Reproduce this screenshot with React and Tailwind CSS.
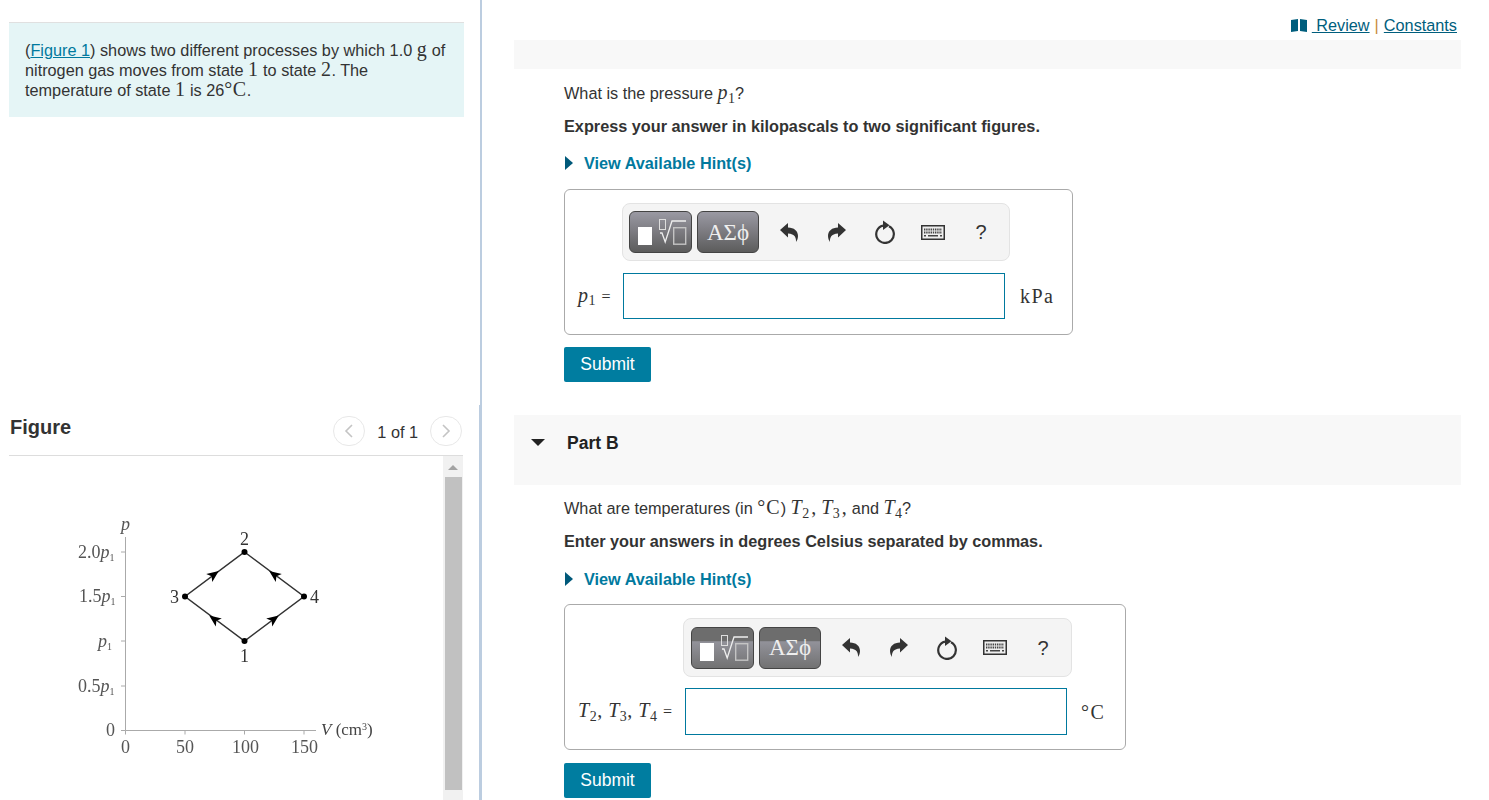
import React from "react";

const serif = "font-['Liberation_Serif',serif]";
const math = `${serif} text-[20px] leading-[0] tracking-[0.5px]`;
const sub = `${serif} text-[14px] leading-[0]`;

const TemplateIcon = () => (
  <svg width="61" height="40" viewBox="0 0 61 40" fill="none">
    <rect x="8" y="15" width="14" height="18" fill="#fff" />
    <rect x="29.500" y="7.500" width="6" height="10" stroke="#ddd" />
    <path d="M30 21l2 0 3.200 9L42 9h14" stroke="#eee" strokeWidth="1.300" />
    <rect x="43.700" y="15.700" width="12" height="16.500" stroke="#c4c4c4" strokeWidth="1.400" />
  </svg>
);

const ArrowIcon = ({ flip }) => (
  <svg className={flip ? "-scale-x-100" : ""} width="18" height="19" viewBox="0 0 18 19" fill="#333">
    <path d="M0 7L8 0V4.500C14 4.500 18 8 18 13C18 15.500 17 17.500 16 19C16.300 15 15 10.800 8 10.500V14.500Z" />
  </svg>
);

const RefreshIcon = () => (
  <svg width="22" height="24" viewBox="0 0 22 24" fill="none">
    <path d="M9 5.600A8.800 8.800 0 1 0 15 6.300" stroke="#333" strokeWidth="2.200" />
    <path d="M9 0.500l6.500 4.700-6.500 4.700z" fill="#333" />
  </svg>
);

const KeyboardIcon = () => (
  <svg width="24" height="15" viewBox="0 0 24 15" fill="none">
    <rect x="0.750" y="0.750" width="22.500" height="13.500" stroke="#333" strokeWidth="1.500" fill="#eee" />
    <path d="M3 4.500h18M3 7.500h18" stroke="#444" strokeWidth="1.800" strokeDasharray="1.400 0.800" />
    <path d="M3 10.800h2M7 10.800h10M19 10.800h2" stroke="#444" strokeWidth="1.600" />
  </svg>
);

const BookIcon = () => (
  <svg width="16" height="13" viewBox="0 0 16 13" fill="#005e7d">
    <path d="M0 1l7 -1v12l-7 1zM9 0l7 1v12l-7 -1z" />
  </svg>
);

const Toolbar = ({ flat, className }) => {
  const btn = flat
    ? "bg-[linear-gradient(#6d6d6d_0%,#6d6d6d_33%,#92929a_34%,#727272_100%)]"
    : "bg-[linear-gradient(#9a99a3,#5c5c5c)]";
  return (
    <div className={`flex items-center rounded-lg border border-[#e3e3e3] bg-[#f4f4f4] ${flat ? "w-[389px] pl-[7px]" : "w-[388px] pl-[6px]"} ${className}`}>
      <div className={`flex h-[42px] w-[63px] items-center justify-center rounded-md border border-[#444] ${btn}`}>
        <TemplateIcon />
      </div>
      <div className={`ml-[5px] flex h-[42px] w-[62px] items-center justify-center rounded-md border border-[#444] text-[23px] leading-none text-[#eee] ${serif} ${btn}`}>
        ΑΣϕ
      </div>
      <div className="ml-[6px] flex items-center text-[#333]">
        <div className="flex w-[48px] justify-center"><ArrowIcon /></div>
        <div className="flex w-[48px] justify-center"><ArrowIcon flip /></div>
        <div className="flex w-[48px] justify-center"><RefreshIcon /></div>
        <div className="flex w-[48px] justify-center"><KeyboardIcon /></div>
        <div className="flex w-[48px] justify-center text-[20px] text-[#333]">?</div>
      </div>
    </div>
  );
};

const HintLink = ({ className }) => (
  <div className={`flex items-center h-5 ${className}`}>
    <span className="ml-px h-0 w-0 border-y-[7px] border-l-[8px] border-y-transparent border-l-[#00597a]" />
    <span className="ml-[11px] font-bold text-[#00799e]">View Available Hint(s)</span>
  </div>
);

const SubmitButton = ({ className }) => (
  <button className={`block h-[35px] w-[87px] rounded-[2px] bg-[#007da0] pb-[2px] text-[17.500px] text-white ${className}`}>Submit</button>
);

const ChartArrow = ({ x, y, angle }) => (
  <path d="M6 0L-6 -5L-3 0L-6 5Z" fill="#000" transform={`translate(${x} ${y}) rotate(${angle})`} />
);

const Chart = () => (
  <svg className="blur-[0.4px]" width="434" height="344" viewBox="9 456 434 344" fill="none">
    <path d="M125.500 537V730.500H316M121 552h4.500M121 596.500h4.500M121 641h4.500M121 686h4.500M121 730.500h4.500M125.500 730.500v4M185 730.500v4M244.500 730.500v4M304 730.500v4" stroke="#aaa" />
    <path d="M244.500 552L304 596.500L244.500 641L185 596.500Z" stroke="#333" strokeWidth="1.500" />
    <circle cx="244.500" cy="552" r="3" fill="#000" />
    <circle cx="304" cy="596.500" r="3" fill="#000" />
    <circle cx="244.500" cy="641" r="3" fill="#000" />
    <circle cx="185" cy="596.500" r="3" fill="#000" />
    <ChartArrow x={214} y={574.500} angle={-37} />
    <ChartArrow x={274} y={574.500} angle={217} />
    <ChartArrow x={274} y={619} angle={-37} />
    <ChartArrow x={214} y={619} angle={217} />
    <g fontFamily="'Liberation Serif',serif" fontSize="18" fill="#555">
      <text x="78" y="558">2.0<tspan fontStyle="italic">p</tspan><tspan fontSize="10" dy="3">1</tspan></text>
      <text x="79" y="602">1.5<tspan fontStyle="italic">p</tspan><tspan fontSize="10" dy="3">1</tspan></text>
      <text x="98" y="647" fontStyle="italic">p<tspan fontSize="10" dy="3" fontStyle="normal">1</tspan></text>
      <text x="78" y="692">0.5<tspan fontStyle="italic">p</tspan><tspan fontSize="10" dy="3">1</tspan></text>
      <text x="106" y="736">0</text>
      <text x="121" y="753">0</text>
      <text x="176" y="753">50</text>
      <text x="232" y="753">100</text>
      <text x="291" y="753">150</text>
      <text x="121" y="530" fontStyle="italic">p</text>
      <text x="321" y="735" fill="#444" fontSize="17"><tspan fontStyle="italic">V</tspan> (cm<tspan fontSize="10" dy="-5">3</tspan><tspan dy="5">)</tspan></text>
      <g fill="#333">
        <text x="240" y="545">2</text>
        <text x="170" y="603">3</text>
        <text x="310" y="603">4</text>
        <text x="240" y="662">1</text>
      </g>
    </g>
  </svg>
);

const NavCircle = ({ dir }) => (
  <div className="flex h-[30px] w-[32px] items-center justify-center rounded-full border border-[#e8e8e8]">
    <svg width="10" height="14" viewBox="0 0 10 14" fill="none">
      <path d={dir === "left" ? "M8 1L2 7l6 6" : "M2 1l6 6-6 6"} stroke="#c4c4c4" strokeWidth="1.600" />
    </svg>
  </div>
);

export default function App() {
  return (
    <div className="flex h-[800px] w-full overflow-hidden bg-white font-['Liberation_Sans',sans-serif] text-[16.25px] leading-5 text-[#333]">
      <div className="w-[479px] shrink-0 pt-[22px] pl-[9px]">
        <div className="h-[95px] w-[455px] border-t border-[#e0e0e0] bg-[#e5f5f6] pt-[17px] pl-4">
          <p className="w-[425px]">
            (<a className="text-[#00799e] underline">Figure 1</a>) shows two different processes by which 1.0 <span className={math}>g</span> of nitrogen gas moves from state <span className={math}>1</span> to state <span className={math}>2</span>. The temperature of state <span className={math}>1</span> is 26<span className={math}>°C</span>.
          </p>
        </div>
        <div className="mt-[294px] flex h-[45px] w-[454px] items-start justify-between border-b border-[#ddd] pt-[5px]">
          <h2 className="pl-px text-[20px] font-bold leading-[22px]">Figure</h2>
          <div className="mr-px flex items-center">
            <NavCircle dir="left" />
            <span className="mx-3 pt-px">1 of 1</span>
            <NavCircle dir="right" />
          </div>
        </div>
        <div className="flex w-[454px]">
          <Chart />
          <div className="flex h-[344px] w-[20px] flex-col items-center bg-[#f1f1f1] pt-[9px]">
            <span className="h-0 w-0 border-x-[5px] border-b-[5px] border-x-transparent border-b-[#a3a3a3]" />
            <div className="mt-[7px] h-[313px] w-[17px] bg-[#c1c1c1]" />
          </div>
        </div>
      </div>

      <div className="flex w-[3px] shrink-0 flex-col">
        <div className="h-[405px] border-l border-white bg-[#bccde0]" />
        <div className="flex-1 bg-[#bccde0]" />
      </div>

      <div className="flex-1 pl-[32px] pr-[28px]">
        <div className="flex h-[40px] items-start justify-end pt-[15px] pr-[4px]">
          <span className="flex items-center text-[#005e7d]">
            <BookIcon />
            <a className="ml-[5px] underline">&nbsp;Review</a>
            <span className="mx-[5px] text-[#c98a3c]">|</span>
            <a className="underline">Constants</a>
          </span>
        </div>
        <div className="h-[29px] bg-[#f8f8f8]" />

        <div className="pl-[50px]">
          <p className="mt-[14px] h-5">What is the pressure <span className={`${math} italic`}>p</span><sub className={sub}>1</sub>?</p>
          <p className="mt-[13px] font-bold">Express your answer in kilopascals to two significant figures.</p>
          <HintLink className="mt-[17px]" />
          <div className="mt-4 h-[146px] w-[509px] rounded-md border border-[#aaa] pt-[13px]">
            <Toolbar className="ml-[57px] h-[58px]" />
            <div className="mt-3 flex h-[46px] items-center pl-[13px]">
              <span className={`w-[45px] ${math}`}><i>p</i><sub className={sub}>1</sub> <span className="text-[16px]">=</span></span>
              <input className="h-full w-[382px] border border-[#00799e] bg-white" />
              <span className={`ml-[15px] ${math} tracking-[1.500px]`}>kPa</span>
            </div>
          </div>
          <SubmitButton className="mt-3" />
        </div>

        <div className="mt-[33px] flex h-[70px] items-start bg-[#f8f8f8] pt-[18px]">
          <span className="mt-[6px] ml-[17px] h-0 w-0 border-x-[7px] border-t-[7px] border-x-transparent border-t-[#222]" />
          <span className="ml-[22px] text-[17.500px] font-bold text-[#222]">Part B</span>
        </div>

        <div className="pl-[50px]">
          <p className="mt-[13px] h-5">
            What are temperatures (in <span className={`${math} tracking-[1px]`}>°C</span>) <span className={`${math} italic`}>T</span><sub className={sub}>2</sub><span className={`ml-[2px] ${math}`}>,</span> <span className={`${math} italic`}>T</span><sub className={sub}>3</sub><span className={`ml-[2px] ${math}`}>,</span> and <span className={`${math} italic`}>T</span><sub className={sub}>4</sub>?
          </p>
          <p className="mt-[13px] font-bold">Enter your answers in degrees Celsius separated by commas.</p>
          <HintLink className="mt-[18px]" />
          <div className="mt-[15px] h-[146px] w-[562px] rounded-md border border-[#aaa] pt-[13px]">
            <Toolbar flat className="ml-[118px] h-[59px]" />
            <div className="mt-[11px] flex h-[47px] items-center pl-[13px]">
              <span className={`w-[107px] ${math}`}>
                <i>T</i><sub className={sub}>2</sub>, <i>T</i><sub className={sub}>3</sub>, <i>T</i><sub className={sub}>4</sub> <span className="text-[16px]">=</span>
              </span>
              <input className="h-full w-[382px] border border-[#00799e] bg-white" />
              <span className={`ml-[14px] ${math} tracking-[1.500px]`}>°C</span>
            </div>
          </div>
          <SubmitButton className="mt-[13px]" />
        </div>
      </div>
    </div>
  );
}
